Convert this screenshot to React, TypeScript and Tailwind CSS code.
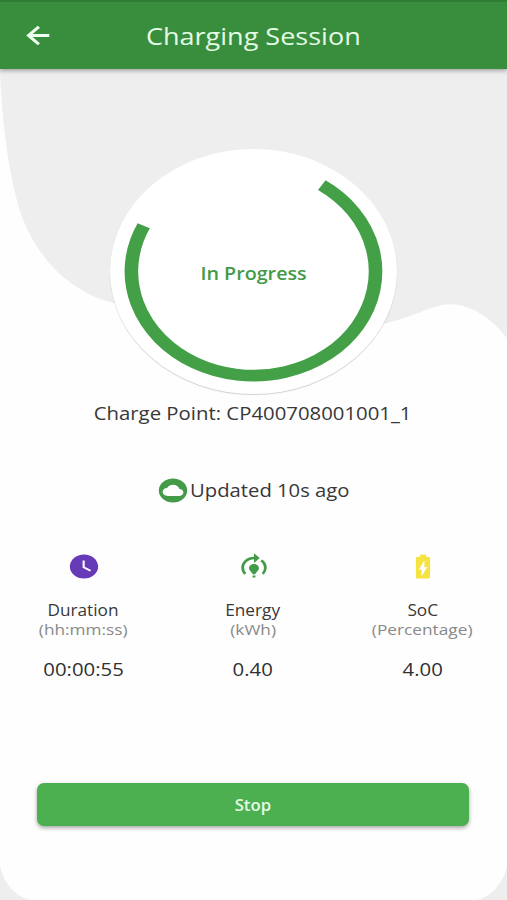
import type { ReactNode } from "react";
import { MdBatteryChargingFull, MdModelTraining, MdWatchLater } from "react-icons/md";

function Backdrop() {
  return (
    <svg className="absolute inset-0 h-full w-full" viewBox="0 0 507 900" preserveAspectRatio="none" aria-hidden="true">
      <rect width="507" height="900" fill="#eeeeee" />
      <path
        d="M0 75 C3 130 9 178 22 217 C38 260 72 292 110 302 C200 330 290 350 387 323 C410 317 427 309 440 305.500 C463 300 488 314 507 338 V866 C503 884 492 896 477 900 H30 C15 896 4 884 0 866 Z"
        fill="#fefefe"
      />
    </svg>
  );
}

function BackArrow() {
  return (
    <svg className="h-[29px] w-[34px]" viewBox="0 0 24 24" preserveAspectRatio="none" fill="none" stroke="#effff0" strokeWidth="2.300" aria-hidden="true">
      <path d="M20 12H5.500M12.600 4.700L5.300 12l7.300 7.300" />
    </svg>
  );
}

function CloudBadge() {
  return (
    <svg className="h-[29px] w-[34px]" viewBox="0 0 24 24" preserveAspectRatio="none" aria-hidden="true">
      <circle cx="12" cy="12" r="10" fill="#439a48" />
      <path
        transform="translate(4.700 5) scale(0.610 0.580)"
        d="M19.350 10.040C18.670 6.590 15.640 4 12 4 9.110 4 6.600 5.640 5.350 8.040 2.340 8.360 0 10.910 0 14c0 3.310 2.690 6 6 6h13c2.760 0 5-2.240 5-5 0-2.640-2.050-4.780-4.650-4.960z"
        fill="#fefefe"
      />
    </svg>
  );
}

function ProgressDial() {
  return (
    <div className="relative flex h-[245px] w-[287px] shrink-0 items-center justify-center rounded-[50%] bg-white shadow-[0_1px_1px_rgba(0,0,0,0.18)]">
      <svg className="absolute inset-0 h-full w-full" viewBox="-122.5 -122.5 245 245" preserveAspectRatio="none" aria-hidden="true">
        <path d="M58.300 -86.400 A104.200 104.200 0 1 1 -93.700 -45.700" fill="none" stroke="#43a047" strokeWidth="11.600" />
      </svg>
      <span className="relative inline-block scale-x-[1.095] pt-1 text-[18px] font-semibold text-[#439a48]">In Progress</span>
    </div>
  );
}

type MetricProps = { icon: ReactNode; label: string; unit: string; value: string };

function Metric({ icon, label, unit, value }: MetricProps) {
  return (
    <div className="flex flex-1 flex-col items-center whitespace-nowrap">
      <div className="flex h-[29px] items-center">{icon}</div>
      <span className="mt-[19px] inline-block scale-x-[1.11] pr-px text-[15.500px] leading-5 text-[#383838]">{label}</span>
      <span className="inline-block scale-x-[1.19] pr-px text-[14.500px] leading-5 text-[#898989]">{unit}</span>
      <span className="mt-[17px] inline-block scale-x-[1.13] pr-px text-[18px] leading-6 text-[#303030]">{value}</span>
    </div>
  );
}

export default function App() {
  return (
    <div className="relative flex h-[900px] w-[507px] flex-col overflow-hidden font-['Open_Sans',sans-serif]">
      <Backdrop />
      <header className="relative flex h-[69px] shrink-0 items-center justify-center border-t-2 border-[#2e7d32] bg-[#388e3c] shadow-[0_2px_4px_rgba(0,0,0,0.3)]">
        <button className="absolute left-[21px] flex" aria-label="Back">
          <BackArrow />
        </button>
        <h1 className="inline-block scale-x-[1.175] pt-0.5 pr-px text-[23px] text-[#e4fbe5]">Charging Session</h1>
      </header>
      <main className="relative flex flex-1 flex-col items-center pt-20">
        <ProgressDial />
        <p className="mt-[7px] mr-[2px] scale-x-[1.13] text-[18px] leading-6 text-[#383838]">Charge Point: CP400708001001_1</p>
        <div className="mt-[50px] mr-[19px] flex h-[30px] items-center">
          <CloudBadge />
          <span className="origin-left scale-x-[1.125] text-[18px] leading-6 text-[#383838]">Updated 10s ago</span>
        </div>
        <section className="mt-[47px] flex w-[509px]">
          <Metric
            icon={<MdWatchLater className="h-[29px] w-[34px] text-[#673ab7]" preserveAspectRatio="none" />}
            label="Duration"
            unit="(hh:mm:ss)"
            value="00:00:55"
          />
          <Metric
            icon={<MdModelTraining className="h-[29px] w-[34px] text-[#439a48]" preserveAspectRatio="none" />}
            label="Energy"
            unit="(kWh)"
            value="0.40"
          />
          <Metric
            icon={<MdBatteryChargingFull className="h-[29px] w-[34px] text-[#f5e342]" preserveAspectRatio="none" />}
            label="SoC"
            unit="(Percentage)"
            value="4.00"
          />
        </section>
        <button className="mt-[102px] mr-px flex h-[43px] w-[432px] items-center justify-center rounded-[7px] bg-[#4caf50] shadow-[0_2px_4px_rgba(0,0,0,0.35)]">
          <span className="inline-block scale-x-[1.08] pt-0.5 text-[15.500px] font-semibold text-[#e4fbe5]">Stop</span>
        </button>
      </main>
    </div>
  );
}
